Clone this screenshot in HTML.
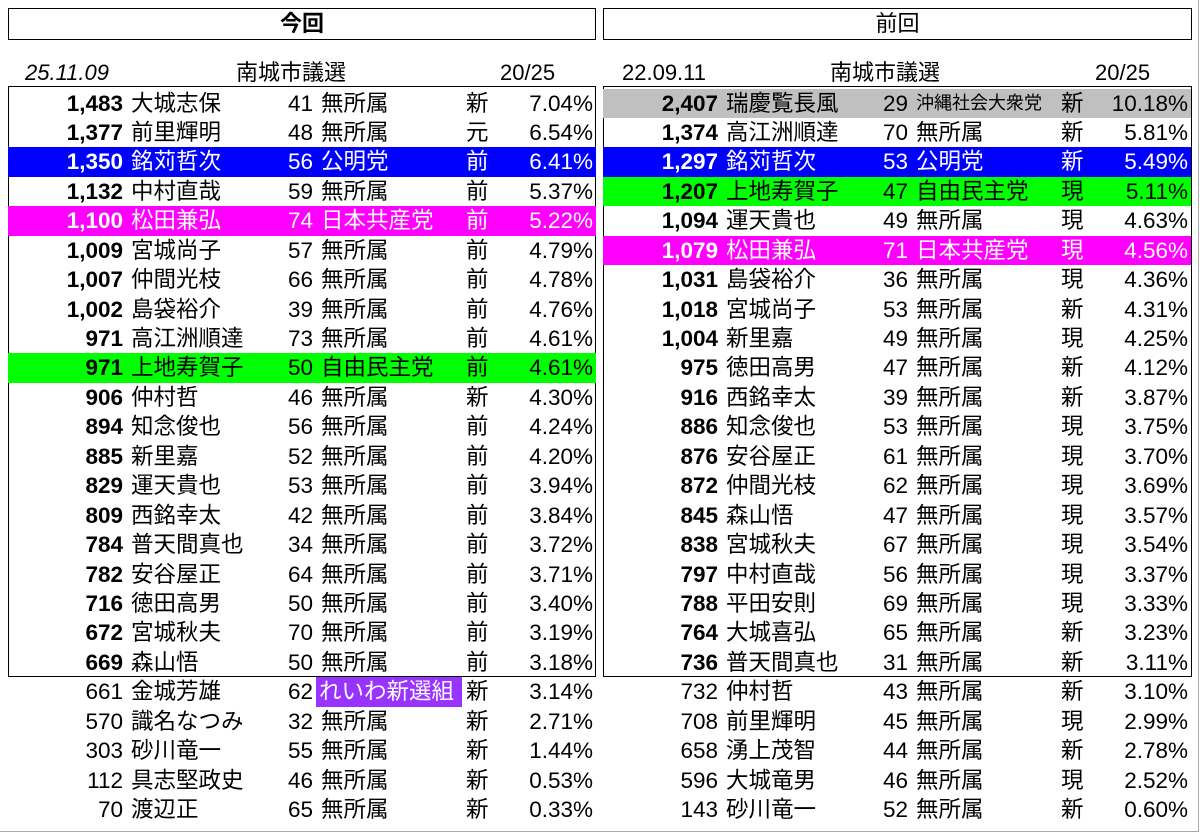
<!DOCTYPE html>
<html><head><meta charset="utf-8"><style>
*{margin:0;padding:0;box-sizing:border-box}
body{width:1200px;height:833px;background:#fff;position:relative;overflow:hidden;font-family:"Liberation Sans","Noto Sans CJK JP",sans-serif;color:#000}
.frame{position:absolute;left:0;top:0;width:1199px;height:832px;border-right:1px solid #aaa;border-bottom:1px solid #aaa}
.hd{position:absolute;top:8px;height:32px;border:1.5px solid #000;text-align:center;font-size:22px;font-weight:bold;line-height:30px}
.sub{position:absolute;top:59px;height:27px;font-size:22px;line-height:27px}
.box{position:absolute;top:86px;height:591px;border:1.5px solid #000}
.panel{position:absolute;top:88.5px;width:588px}
.r{position:relative;height:29.45px;font-size:22.5px;line-height:29.45px;white-space:nowrap}
.r span{position:absolute;top:0}
.v{left:0;width:115px;text-align:right}
.b .v{font-weight:bold}
.n{left:123px}
.a{left:250px;width:55px;text-align:right}
.p{left:313px}
.s{left:458px}
.c{left:500px;width:85px;text-align:right}
.blue{background:#0000ff;color:#fff}
.mag{background:#ff00ff;color:#fff}
.grn{background:#00ff00}
.gry{background:#c0c0c0}
.rw{background:#9933ff;color:#fff;left:308px!important;width:146px;padding-left:3px;overflow:hidden}
</style></head><body>
<div class="frame"></div>
<div class="hd" style="left:8px;width:588px">今回</div>
<div class="hd" style="left:603px;width:589px;font-weight:normal">前回</div>
<div class="sub" style="left:25px;font-style:italic">25.11.09</div>
<div class="sub" style="left:236px">南城市議選</div>
<div class="sub" style="left:500px">20/25</div>
<div class="sub" style="left:622px">22.09.11</div>
<div class="sub" style="left:830px">南城市議選</div>
<div class="sub" style="left:1095px">20/25</div>
<div class="box" style="left:8px;width:588px"></div>
<div class="box" style="left:603px;width:589px"></div>

<div class="panel" style="left:8px">
<div class="r b"><span class="v">1,483</span><span class="n">大城志保</span><span class="a">41</span><span class="p">無所属</span><span class="s">新</span><span class="c">7.04%</span></div>
<div class="r b"><span class="v">1,377</span><span class="n">前里輝明</span><span class="a">48</span><span class="p">無所属</span><span class="s">元</span><span class="c">6.54%</span></div>
<div class="r b blue"><span class="v">1,350</span><span class="n">銘苅哲次</span><span class="a">56</span><span class="p">公明党</span><span class="s">前</span><span class="c">6.41%</span></div>
<div class="r b"><span class="v">1,132</span><span class="n">中村直哉</span><span class="a">59</span><span class="p">無所属</span><span class="s">前</span><span class="c">5.37%</span></div>
<div class="r b mag"><span class="v">1,100</span><span class="n">松田兼弘</span><span class="a">74</span><span class="p">日本共産党</span><span class="s">前</span><span class="c">5.22%</span></div>
<div class="r b"><span class="v">1,009</span><span class="n">宮城尚子</span><span class="a">57</span><span class="p">無所属</span><span class="s">前</span><span class="c">4.79%</span></div>
<div class="r b"><span class="v">1,007</span><span class="n">仲間光枝</span><span class="a">66</span><span class="p">無所属</span><span class="s">前</span><span class="c">4.78%</span></div>
<div class="r b"><span class="v">1,002</span><span class="n">島袋裕介</span><span class="a">39</span><span class="p">無所属</span><span class="s">前</span><span class="c">4.76%</span></div>
<div class="r b"><span class="v">971</span><span class="n">高江洲順達</span><span class="a">73</span><span class="p">無所属</span><span class="s">前</span><span class="c">4.61%</span></div>
<div class="r b grn"><span class="v">971</span><span class="n">上地寿賀子</span><span class="a">50</span><span class="p">自由民主党</span><span class="s">前</span><span class="c">4.61%</span></div>
<div class="r b"><span class="v">906</span><span class="n">仲村哲</span><span class="a">46</span><span class="p">無所属</span><span class="s">新</span><span class="c">4.30%</span></div>
<div class="r b"><span class="v">894</span><span class="n">知念俊也</span><span class="a">56</span><span class="p">無所属</span><span class="s">前</span><span class="c">4.24%</span></div>
<div class="r b"><span class="v">885</span><span class="n">新里嘉</span><span class="a">52</span><span class="p">無所属</span><span class="s">前</span><span class="c">4.20%</span></div>
<div class="r b"><span class="v">829</span><span class="n">運天貴也</span><span class="a">53</span><span class="p">無所属</span><span class="s">前</span><span class="c">3.94%</span></div>
<div class="r b"><span class="v">809</span><span class="n">西銘幸太</span><span class="a">42</span><span class="p">無所属</span><span class="s">前</span><span class="c">3.84%</span></div>
<div class="r b"><span class="v">784</span><span class="n">普天間真也</span><span class="a">34</span><span class="p">無所属</span><span class="s">前</span><span class="c">3.72%</span></div>
<div class="r b"><span class="v">782</span><span class="n">安谷屋正</span><span class="a">64</span><span class="p">無所属</span><span class="s">前</span><span class="c">3.71%</span></div>
<div class="r b"><span class="v">716</span><span class="n">徳田高男</span><span class="a">50</span><span class="p">無所属</span><span class="s">前</span><span class="c">3.40%</span></div>
<div class="r b"><span class="v">672</span><span class="n">宮城秋夫</span><span class="a">70</span><span class="p">無所属</span><span class="s">前</span><span class="c">3.19%</span></div>
<div class="r b"><span class="v">669</span><span class="n">森山悟</span><span class="a">50</span><span class="p">無所属</span><span class="s">前</span><span class="c">3.18%</span></div>
<div class="r"><span class="v">661</span><span class="n">金城芳雄</span><span class="a">62</span><span class="p rw">れいわ新選組</span><span class="s">新</span><span class="c">3.14%</span></div>
<div class="r"><span class="v">570</span><span class="n">識名なつみ</span><span class="a">32</span><span class="p">無所属</span><span class="s">新</span><span class="c">2.71%</span></div>
<div class="r"><span class="v">303</span><span class="n">砂川竜一</span><span class="a">55</span><span class="p">無所属</span><span class="s">新</span><span class="c">1.44%</span></div>
<div class="r"><span class="v">112</span><span class="n">具志堅政史</span><span class="a">46</span><span class="p">無所属</span><span class="s">新</span><span class="c">0.53%</span></div>
<div class="r"><span class="v">70</span><span class="n">渡辺正</span><span class="a">65</span><span class="p">無所属</span><span class="s">新</span><span class="c">0.33%</span></div>
</div>

<div class="panel" style="left:603px">
<div class="r b gry"><span class="v">2,407</span><span class="n">瑞慶覧長風</span><span class="a">29</span><span class="p" style="font-size:18px">沖縄社会大衆党</span><span class="s">新</span><span class="c">10.18%</span></div>
<div class="r b"><span class="v">1,374</span><span class="n">高江洲順達</span><span class="a">70</span><span class="p">無所属</span><span class="s">新</span><span class="c">5.81%</span></div>
<div class="r b blue"><span class="v">1,297</span><span class="n">銘苅哲次</span><span class="a">53</span><span class="p">公明党</span><span class="s">新</span><span class="c">5.49%</span></div>
<div class="r b grn"><span class="v">1,207</span><span class="n">上地寿賀子</span><span class="a">47</span><span class="p">自由民主党</span><span class="s">現</span><span class="c">5.11%</span></div>
<div class="r b"><span class="v">1,094</span><span class="n">運天貴也</span><span class="a">49</span><span class="p">無所属</span><span class="s">現</span><span class="c">4.63%</span></div>
<div class="r b mag"><span class="v">1,079</span><span class="n">松田兼弘</span><span class="a">71</span><span class="p">日本共産党</span><span class="s">現</span><span class="c">4.56%</span></div>
<div class="r b"><span class="v">1,031</span><span class="n">島袋裕介</span><span class="a">36</span><span class="p">無所属</span><span class="s">現</span><span class="c">4.36%</span></div>
<div class="r b"><span class="v">1,018</span><span class="n">宮城尚子</span><span class="a">53</span><span class="p">無所属</span><span class="s">新</span><span class="c">4.31%</span></div>
<div class="r b"><span class="v">1,004</span><span class="n">新里嘉</span><span class="a">49</span><span class="p">無所属</span><span class="s">現</span><span class="c">4.25%</span></div>
<div class="r b"><span class="v">975</span><span class="n">徳田高男</span><span class="a">47</span><span class="p">無所属</span><span class="s">新</span><span class="c">4.12%</span></div>
<div class="r b"><span class="v">916</span><span class="n">西銘幸太</span><span class="a">39</span><span class="p">無所属</span><span class="s">新</span><span class="c">3.87%</span></div>
<div class="r b"><span class="v">886</span><span class="n">知念俊也</span><span class="a">53</span><span class="p">無所属</span><span class="s">現</span><span class="c">3.75%</span></div>
<div class="r b"><span class="v">876</span><span class="n">安谷屋正</span><span class="a">61</span><span class="p">無所属</span><span class="s">現</span><span class="c">3.70%</span></div>
<div class="r b"><span class="v">872</span><span class="n">仲間光枝</span><span class="a">62</span><span class="p">無所属</span><span class="s">現</span><span class="c">3.69%</span></div>
<div class="r b"><span class="v">845</span><span class="n">森山悟</span><span class="a">47</span><span class="p">無所属</span><span class="s">現</span><span class="c">3.57%</span></div>
<div class="r b"><span class="v">838</span><span class="n">宮城秋夫</span><span class="a">67</span><span class="p">無所属</span><span class="s">現</span><span class="c">3.54%</span></div>
<div class="r b"><span class="v">797</span><span class="n">中村直哉</span><span class="a">56</span><span class="p">無所属</span><span class="s">現</span><span class="c">3.37%</span></div>
<div class="r b"><span class="v">788</span><span class="n">平田安則</span><span class="a">69</span><span class="p">無所属</span><span class="s">現</span><span class="c">3.33%</span></div>
<div class="r b"><span class="v">764</span><span class="n">大城喜弘</span><span class="a">65</span><span class="p">無所属</span><span class="s">新</span><span class="c">3.23%</span></div>
<div class="r b"><span class="v">736</span><span class="n">普天間真也</span><span class="a">31</span><span class="p">無所属</span><span class="s">新</span><span class="c">3.11%</span></div>
<div class="r"><span class="v">732</span><span class="n">仲村哲</span><span class="a">43</span><span class="p">無所属</span><span class="s">新</span><span class="c">3.10%</span></div>
<div class="r"><span class="v">708</span><span class="n">前里輝明</span><span class="a">45</span><span class="p">無所属</span><span class="s">現</span><span class="c">2.99%</span></div>
<div class="r"><span class="v">658</span><span class="n">湧上茂智</span><span class="a">44</span><span class="p">無所属</span><span class="s">新</span><span class="c">2.78%</span></div>
<div class="r"><span class="v">596</span><span class="n">大城竜男</span><span class="a">46</span><span class="p">無所属</span><span class="s">現</span><span class="c">2.52%</span></div>
<div class="r"><span class="v">143</span><span class="n">砂川竜一</span><span class="a">52</span><span class="p">無所属</span><span class="s">新</span><span class="c">0.60%</span></div>
</div>
</body></html>
